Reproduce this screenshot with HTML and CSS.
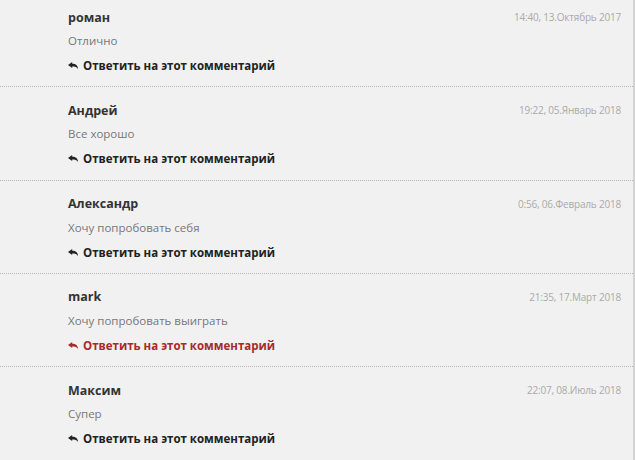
FILE: index.html
```html
<!DOCTYPE html>
<html lang="ru">
<head>
  <meta charset="UTF-8">
  <title>Комментарии</title>
  <link rel="stylesheet" href="styles.css">
</head>
<body>
  <div class="comments">
    <div class="comment">
      <div class="comment-head">
        <span class="author">роман</span>
        <span class="date">14:40, 13.Октябрь 2017</span>
      </div>
      <p class="text">Отлично</p>
      <a class="reply" href="#"><svg viewBox="0 0 10 7"><path d="M0 3 L4.2 0 V1.7 C7.8 1.7 10 3.6 10 7 C8.8 5.1 7 4.5 4.2 4.5 V6.1 Z"/></svg>Ответить на этот комментарий</a>
    </div>
    <div class="comment">
      <div class="comment-head">
        <span class="author">Андрей</span>
        <span class="date">19:22, 05.Январь 2018</span>
      </div>
      <p class="text">Все хорошо</p>
      <a class="reply" href="#"><svg viewBox="0 0 10 7"><path d="M0 3 L4.2 0 V1.7 C7.8 1.7 10 3.6 10 7 C8.8 5.1 7 4.5 4.2 4.5 V6.1 Z"/></svg>Ответить на этот комментарий</a>
    </div>
    <div class="comment">
      <div class="comment-head">
        <span class="author">Александр</span>
        <span class="date">0:56, 06.Февраль 2018</span>
      </div>
      <p class="text">Хочу попробовать себя</p>
      <a class="reply" href="#"><svg viewBox="0 0 10 7"><path d="M0 3 L4.2 0 V1.7 C7.8 1.7 10 3.6 10 7 C8.8 5.1 7 4.5 4.2 4.5 V6.1 Z"/></svg>Ответить на этот комментарий</a>
    </div>
    <div class="comment">
      <div class="comment-head">
        <span class="author">mark</span>
        <span class="date">21:35, 17.Март 2018</span>
      </div>
      <p class="text">Хочу попробовать выиграть</p>
      <a class="reply hover" href="#"><svg viewBox="0 0 10 7"><path d="M0 3 L4.2 0 V1.7 C7.8 1.7 10 3.6 10 7 C8.8 5.1 7 4.5 4.2 4.5 V6.1 Z"/></svg>Ответить на этот комментарий</a>
    </div>
    <div class="comment">
      <div class="comment-head">
        <span class="author">Максим</span>
        <span class="date">22:07, 08.Июль 2018</span>
      </div>
      <p class="text">Супер</p>
      <a class="reply" href="#"><svg viewBox="0 0 10 7"><path d="M0 3 L4.2 0 V1.7 C7.8 1.7 10 3.6 10 7 C8.8 5.1 7 4.5 4.2 4.5 V6.1 Z"/></svg>Ответить на этот комментарий</a>
    </div>
  </div>
</body>
</html>
```

FILE: styles.css
```css
* {
  margin: 0;
  padding: 0;
  box-sizing: border-box;
}

body {
  font-family: 'Open Sans', 'Liberation Sans', sans-serif;
  background-color: #f1f1f1;
  height: 100vh;
  overflow: hidden;
}

/* Comment list */
.comments {
  width: 635px;
  margin-top: -6px;
  border-right: 2px solid #d2d2d2;
  min-height: 480px;
}

.comment {
  height: 93.33px;
  padding: 14px 12px 0 68px;
  border-bottom: 1px dotted #b4b4b4;
}

.comment-head {
  display: flex;
  justify-content: space-between;
  align-items: center;
  height: 18px;
}

.author {
  font-size: 12.5px;
  font-weight: 700;
  color: #333;
}

.date {
  font-size: 10px;
  color: #aaa;
  letter-spacing: -0.2px;
}

.text {
  margin-top: 6px;
  font-size: 11.5px;
  line-height: 18px;
  color: #777;
}

/* Reply link */
.reply {
  display: flex;
  align-items: center;
  gap: 5px;
  margin-top: 6.5px;
  height: 18px;
  font-size: 11.5px;
  font-weight: 700;
  color: #222;
  text-decoration: none;
}

.reply svg {
  width: 10px;
  height: 7px;
  fill: currentColor;
}

.reply.hover {
  color: #a82a2a;
}
```
